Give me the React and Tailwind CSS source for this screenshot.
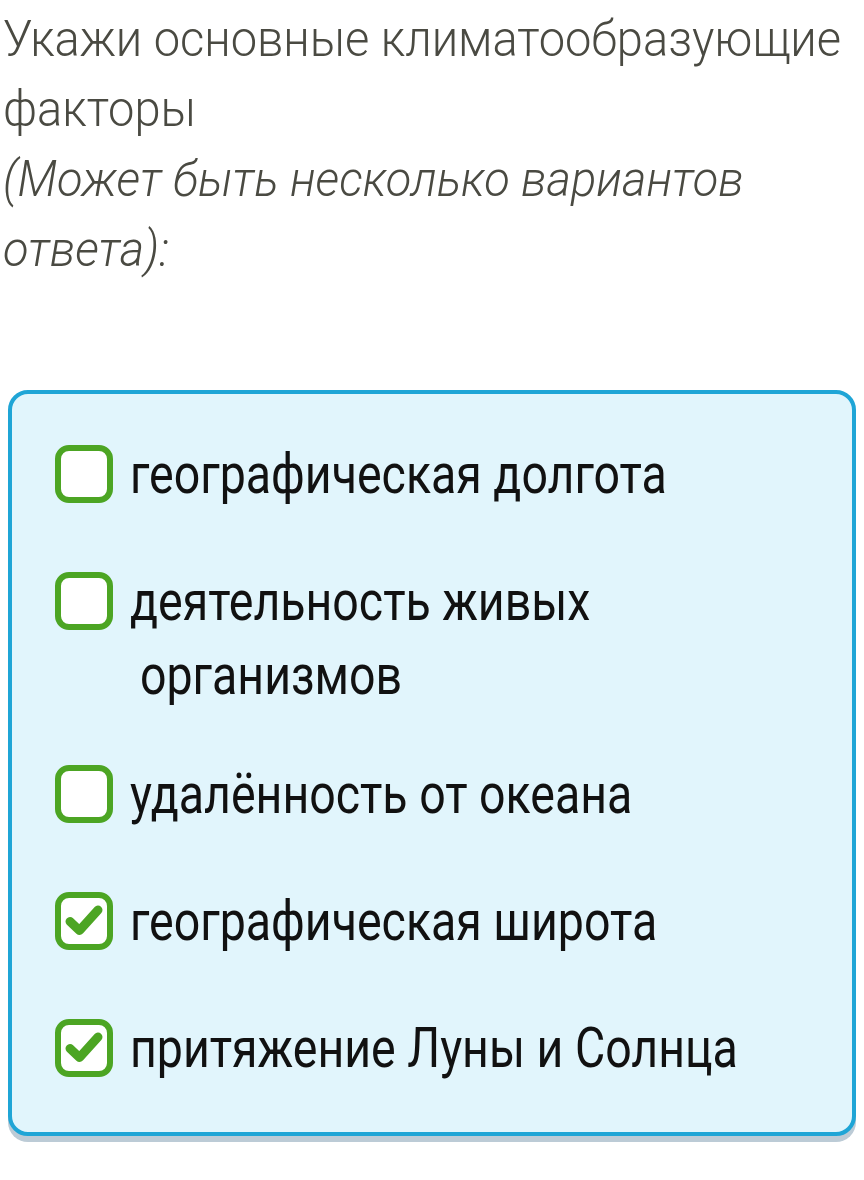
const options = [
  { text: ["географическая долгота"], checked: false },
  { text: ["деятельность живых", "организмов"], checked: false },
  { text: ["удалённость от океана"], checked: false },
  { text: ["географическая широта"], checked: true },
  { text: ["притяжение Луны и Солнца"], checked: true },
];

const CheckBox = ({ checked }) => (
  <div className="w-[58px] h-[58px] shrink-0 rounded-[14px] border-[6px] border-[#4ca523] bg-white flex items-center justify-center">
    {checked && (
      <svg width="46" height="46" viewBox="0 0 46 46" className="shrink-0 block">
        <path d="M9 23.5 L18.5 32.5 L37 12" fill="none" stroke="#4ca523" strokeWidth="9" strokeLinecap="round" strokeLinejoin="round" />
      </svg>
    )}
  </div>
);

export default function App() {
  return (
    <div className="w-[864px] h-[1180px] bg-white overflow-hidden" style={{ fontFamily: "Roboto, 'Noto Sans', sans-serif" }}>
      <div className="pl-[3px] pt-[4px] text-[50px] leading-[70px] font-light text-[#4a4a42] whitespace-nowrap">
        <p className="origin-left scale-x-[0.94]">Укажи основные климатообразующие</p>
        <p className="origin-left scale-x-[0.94]">факторы</p>
        <p className="origin-left scale-x-[0.94] italic">(Может быть несколько вариантов</p>
        <p className="origin-left scale-x-[0.94] italic">ответа):</p>
      </div>

      <div className="mx-[8px] mt-[106px] rounded-[20px] border-[4px] border-[#1fa5d6] bg-[#e1f5fc] shadow-[0_6px_0_#bccbd6] pl-[43px] pt-[43px] pb-[47px] flex flex-col gap-[53px]">
        {options.map((opt, i) => (
          <div key={i} className={`flex items-start gap-[17px] ${i === 1 ? "-mb-[8px]" : ""}`}>
            <div className="h-[74px] flex items-center">
              <CheckBox checked={opt.checked} />
            </div>
            <div className="text-[56px] leading-[74px] text-[#111] whitespace-nowrap">
              {opt.text.map((line, j) => (
                <p key={j} className={`origin-left scale-x-[0.83] ${j > 0 ? "pl-[12px]" : ""}`}>{line}</p>
              ))}
            </div>
          </div>
        ))}
      </div>
    </div>
  );
}
